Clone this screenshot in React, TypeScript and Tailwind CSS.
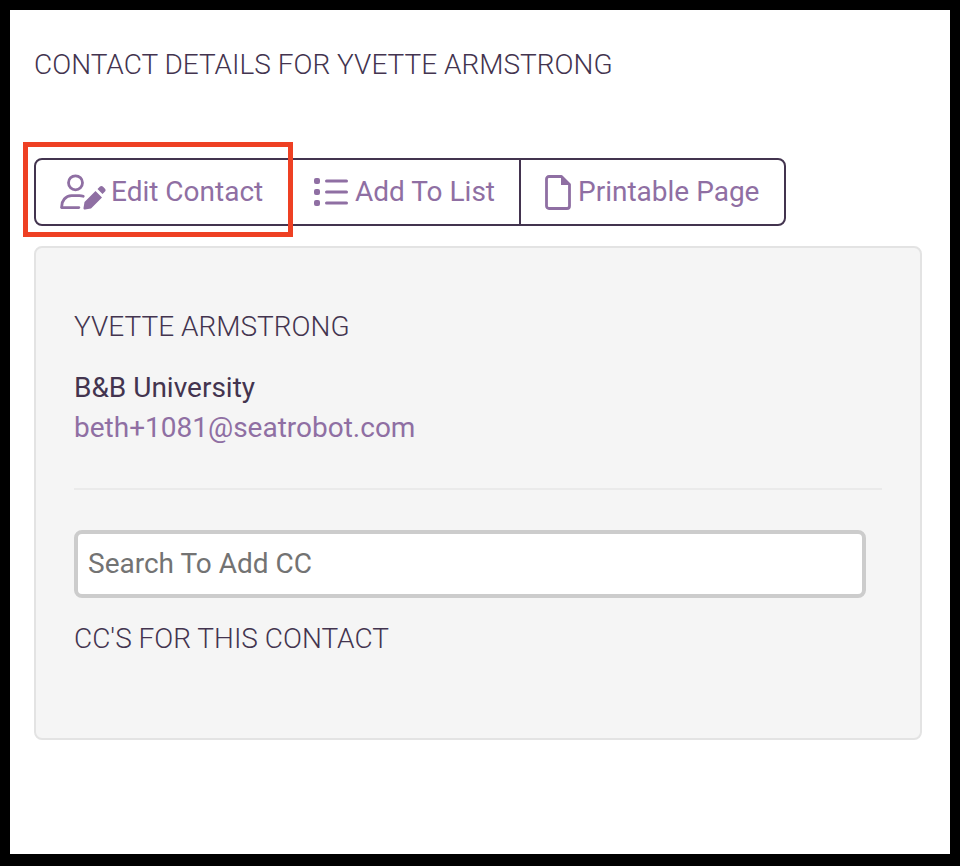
const PURPLE = "#8f6fa3";

function EditUserIcon() {
  return (
    <svg width="46" height="36" viewBox="0 0 46 36" fill="none" className="shrink-0">
      <circle cx="15.500" cy="8.800" r="7" stroke={PURPLE} strokeWidth="2.800" />
      <path d="M1.800 33.300c-.5-6.500 4-11.700 9.700-11.700h8c1.300 0 2.500.2 3.700.7" stroke={PURPLE} strokeWidth="2.800" strokeLinecap="round" />
      <path d="M1.800 33.600h17" stroke={PURPLE} strokeWidth="2.800" strokeLinecap="round" />
      <path d="M25 35.500c-1 .2-1.700-.5-1.500-1.500l1-6 11-11 6.500 6.500-11 11z" fill={PURPLE} />
      <path d="M37.500 15l2.500-2.500c.8-.8 2-.8 2.800 0l2.200 2.200c.8.8.8 2 0 2.800L42.500 20z" fill={PURPLE} />
    </svg>
  );
}

function ListIcon() {
  return (
    <svg width="34" height="28" viewBox="0 0 34 28" fill={PURPLE} className="shrink-0">
      <rect x="0" y="0" width="6" height="6" rx="2" />
      <rect x="0" y="11" width="6" height="6" rx="2" />
      <rect x="0" y="22" width="6" height="6" rx="2" />
      <rect x="11" y="1.500" width="23" height="3" rx="1.500" />
      <rect x="11" y="12.500" width="23" height="3" rx="1.500" />
      <rect x="11" y="23.500" width="23" height="3" rx="1.500" />
    </svg>
  );
}

function FileIcon() {
  return (
    <svg width="26" height="35" viewBox="0 0 26 35" fill="none" className="shrink-0">
      <path d="M4 1.500h12.500L24.500 9.500V31a2.500 2.500 0 0 1-2.500 2.500H4A2.500 2.500 0 0 1 1.500 31V4A2.500 2.500 0 0 1 4 1.500z" stroke={PURPLE} strokeWidth="2.800" strokeLinejoin="round" />
      <path d="M16 1.500l9 8.500h-9z" fill={PURPLE} />
    </svg>
  );
}

export default function App() {
  return (
    <div className="relative w-[960px] h-[866px] border-black border-l-[10px] border-t-[10px] border-r-[10px] border-b-[12px] bg-white font-['Roboto',sans-serif] text-[#43344f]">
      <div className="pl-6 pr-7 pt-[37px]">
        <h1 className="text-[28px] leading-9 font-light">CONTACT DETAILS FOR YVETTE ARMSTRONG</h1>

        <div className="mt-[75px] flex w-[752px] h-[68px] border-2 border-[#43344f] rounded-lg text-[28px]" style={{ color: PURPLE }}>
          <div className="w-[255px] flex items-center gap-[5px] pl-6 border-r-2 border-[#43344f]">
            <EditUserIcon />
            <span>Edit Contact</span>
          </div>
          <div className="w-[230px] flex items-center gap-[7px] pl-[23px] border-r-2 border-[#43344f]">
            <ListIcon />
            <span>Add To List</span>
          </div>
          <div className="flex-1 flex items-center gap-[7px] pl-6">
            <FileIcon />
            <span>Printable Page</span>
          </div>
        </div>

        <div className="mt-5 h-[494px] border-2 border-[#e3e3e3] rounded-lg bg-[#f5f5f5] px-[38px] pt-[61px]">
          <h2 className="text-[28px] leading-9 font-light">YVETTE ARMSTRONG</h2>
          <div className="mt-[23px] text-[28px] leading-10">B&amp;B University</div>
          <a className="block text-[28px] leading-10" style={{ color: PURPLE }}>beth+1081@seatrobot.com</a>
          <div className="mt-[40px] border-t-2 border-[#eaeaea]" />
          <div className="mt-10 w-[792px] h-[68px] border-4 border-[#cccccc] rounded-lg bg-white flex items-center pl-[10px] text-[28px] text-[#737373]">
            Search To Add CC
          </div>
          <h2 className="mt-[23px] text-[28px] leading-9 font-light">CC'S FOR THIS CONTACT</h2>
        </div>
      </div>

      <div className="absolute left-[13px] top-[132px] w-[270px] h-[95px] border-[5px] border-[#ee4023]" />
    </div>
  );
}
